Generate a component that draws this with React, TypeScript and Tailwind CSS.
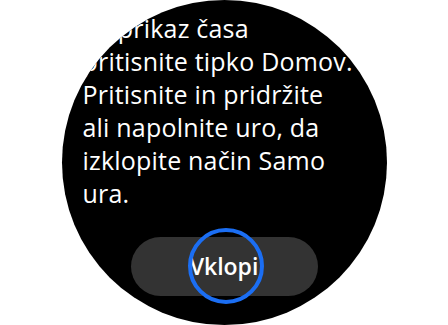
export default function App() {
  return (
    <div className="w-[448px] h-[325px] bg-white overflow-hidden">
      <div className="relative mx-auto w-[325px] h-[325px] rounded-full bg-black overflow-hidden">
        <p
          className="pl-[21px] pt-[12px] text-[25px] leading-[33px] tracking-[0.2px] text-white whitespace-nowrap"
          style={{ fontFamily: '"Open Sans", sans-serif' }}
        >
          Za prikaz časa
          <br />
          pritisnite tipko Domov.
          <br />
          Pritisnite in pridržite
          <br />
          ali napolnite uro, da
          <br />
          izklopite način Samo
          <br />
          ura.
        </p>
        <button
          className="mx-auto mt-[27px] flex h-[59px] w-[187px] items-center justify-center rounded-full bg-[#333333] text-[23px] font-semibold text-white"
          style={{ fontFamily: '"Open Sans", sans-serif' }}
        >
          Vklopi
        </button>
        <div className="pointer-events-none absolute left-[126px] top-[228px] h-[76px] w-[76px] rounded-full border-4 border-[#1b6ef3]" />
      </div>
    </div>
  );
}
